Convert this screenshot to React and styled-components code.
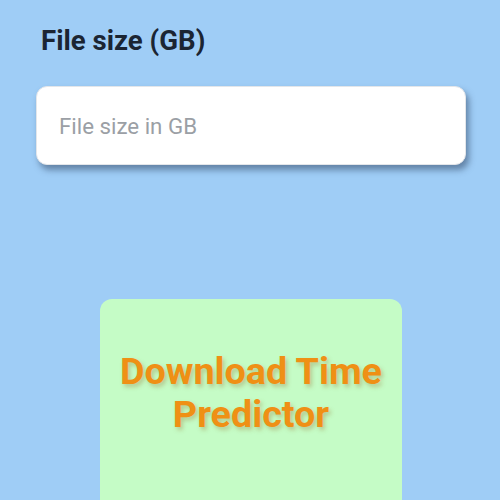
import React from 'react';
import styled, { createGlobalStyle } from 'styled-components';

const GlobalStyle = createGlobalStyle`
  html, body {
    margin: 0;
    padding: 0;
    background: #9fcdf6;
    font-family: Roboto, "Noto Sans", sans-serif;
  }
`;

const Page = styled.div`
  width: 500px;
  height: 500px;
  overflow: hidden;
  display: flex;
  flex-direction: column;
  padding: 26px 34px 0 36px;
  box-sizing: border-box;
  & > * {
    flex-shrink: 0;
  }
`;

const Label = styled.label`
  display: block;
  margin-left: 5px;
  font-size: 27.6px;
  font-weight: 700;
  color: #1b2533;
  line-height: 30px;
`;

const Input = styled.input`
  margin-top: 30px;
  width: 430px;
  height: 79px;
  box-sizing: border-box;
  padding: 0 22px;
  border: 1px solid #e3e6ea;
  border-radius: 11px;
  background: #fff;
  font-family: Roboto, sans-serif;
  font-size: 22.3px;
  color: #222;
  outline: none;
  box-shadow: 3px 5px 6px rgba(40, 60, 90, 0.5);
  &::placeholder {
    color: #9b9fa5;
  }
`;

const Card = styled.div`
  margin-top: 134px;
  align-self: center;
  width: 302px;
  height: 240px;
  border-radius: 12px;
  background: #c5fcc6;
  display: flex;
  justify-content: center;
  padding-top: 51px;
  box-sizing: border-box;
`;

const Title = styled.h1`
  margin: 0;
  text-align: center;
  font-size: 37.7px;
  font-weight: 700;
  line-height: 43px;
  color: #ef9015;
  text-shadow: 2px 3px 4px rgba(150, 110, 40, 0.35);
`;

export default function App() {
  return (
    <>
      <GlobalStyle />
      <Page>
        <Label htmlFor="size">File size (GB)</Label>
        <Input id="size" type="text" placeholder="File size in GB" />
        <Card>
          <Title>
            Download Time
            <br />
            Predictor
          </Title>
        </Card>
      </Page>
    </>
  );
}
